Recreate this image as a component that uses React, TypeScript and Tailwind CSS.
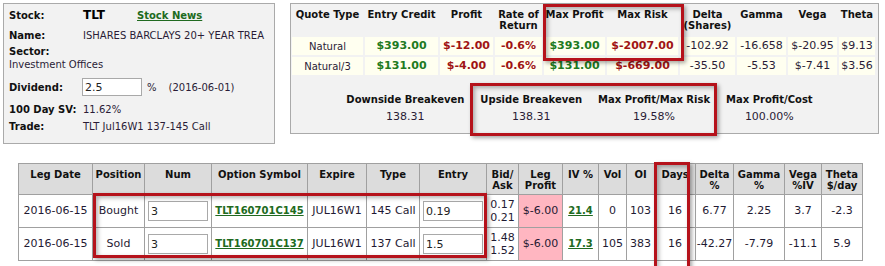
import React from 'react';

const quoteRows = [
  { type: 'Natural', credit: '$393.00', profit: '$-12.00', ror: '-0.6%', maxProfit: '$393.00', maxRisk: '$-2007.00', delta: '-102.92', gamma: '-16.658', vega: '$-20.95', theta: '$9.13' },
  { type: 'Natural/3', credit: '$131.00', profit: '$-4.00', ror: '-0.6%', maxProfit: '$131.00', maxRisk: '$-669.00', delta: '-35.50', gamma: '-5.53', vega: '$-7.41', theta: '$3.56' },
];

const legs = [
  { date: '2016-06-15', pos: 'Bought', num: '3', symbol: 'TLT160701C145', expire: 'JUL16W1', type: '145 Call', entry: '0.19', bid: '0.17', ask: '0.21', profit: '$-6.00', iv: '21.4', vol: '0', oi: '103', days: '16', delta: '6.77', gamma: '2.25', vega: '3.7', theta: '-2.3' },
  { date: '2016-06-15', pos: 'Sold', num: '3', symbol: 'TLT160701C137', expire: 'JUL16W1', type: '137 Call', entry: '1.5', bid: '1.48', ask: '1.52', profit: '$-6.00', iv: '17.3', vol: '105', oi: '383', days: '16', delta: '-42.27', gamma: '-7.79', vega: '-11.1', theta: '5.9' },
];

const breakevens = [
  { label: 'Downside Breakeven', value: '138.31' },
  { label: 'Upside Breakeven', value: '138.31' },
  { label: 'Max Profit/Max Risk', value: '19.58%' },
  { label: 'Max Profit/Cost', value: '100.00%' },
];

// red highlight boxes drawn over the tables
const Highlight = ({ className }: { className: string }) => (
  <div
    className={`absolute border-[3px] border-[#b5121b] shadow-[2px_2px_4px_rgba(0,0,0,0.35),inset_2px_2px_4px_rgba(0,0,0,0.3)] pointer-events-none ${className}`}
  />
);

export default function App() {
  const th = 'font-bold text-[10px] text-[#111] align-top pt-[3px] leading-[11px]';
  const td = 'bg-[#fffff0] h-[18px] text-center';
  const bth = 'border border-[#a0a0a0] bg-[#dcdcdc] font-bold text-[10px] text-[#111] align-top pt-[5px] leading-[11px]';
  const btd = 'border border-[#a0a0a0] text-center h-[33px]';

  return (
    <div className="relative w-[885px] h-[266px] overflow-hidden bg-white font-['DejaVu_Sans',Verdana,sans-serif] text-[#2a1c36]">
      <div className="flex pl-[3px] pt-[3px] gap-[15px]">
        {/* Stock summary */}
        <div className="w-[272px] h-[141px] border border-[#aaa] bg-[#f2f2f2] pl-[5px] text-[10px]">
          <div className="flex items-center h-[22px]">
            <span className="w-[74px] font-bold text-[#111]">Stock:</span>
            <span className="w-[54px] font-bold text-[12px] text-black">TLT</span>
            <a className="font-bold text-[#206a20] underline">Stock News</a>
          </div>
          <div className="flex items-center h-[18px]">
            <span className="w-[74px] font-bold text-[#111]">Name:</span>
            <span>ISHARES BARCLAYS 20+ YEAR TREA</span>
          </div>
          <div className="h-[14px] flex items-center font-bold text-[#111]">Sector:</div>
          <div className="h-[12px] flex items-center">Investment Offices</div>
          <div className="flex items-center h-[22px] mt-[6px]">
            <span className="w-[73px] font-bold text-[#111]">Dividend:</span>
            <input
              readOnly
              value="2.5"
              className="w-[60px] h-[18px] border border-[#a9a9a9] bg-white px-[2px] text-[11px] text-[#222] outline-none"
            />
            <span className="ml-[5px]">%</span>
            <span className="ml-[12px]">(2016-06-01)</span>
          </div>
          <div className="flex items-center h-[18px] mt-[2px]">
            <span className="w-[74px] font-bold text-[#111]">100 Day SV:</span>
            <span>11.62%</span>
          </div>
          <div className="flex items-center h-[16px]">
            <span className="w-[74px] font-bold text-[#111]">Trade:</span>
            <span>TLT Jul16W1 137-145 Call</span>
          </div>
        </div>

        {/* Quote summary */}
        <div className="w-[589px] h-[131px] border border-[#aaa] bg-[#f2f2f2]">
          <table className="table-fixed border-separate border-spacing-[2px] -ml-[1px]">
            <colgroup>
              <col className="w-[71px]" />
              <col className="w-[73px]" />
              <col className="w-[53px]" />
              <col className="w-[47px]" />
              <col className="w-[61px]" />
              <col className="w-[71px]" />
              <col className="w-[55px]" />
              <col className="w-[49px]" />
              <col className="w-[49px]" />
              <col className="w-[36px]" />
            </colgroup>
            <thead>
              <tr className="h-[29px]">
                <th className={th}>Quote Type</th>
                <th className={th}>Entry Credit</th>
                <th className={th}>Profit</th>
                <th className={th}>Rate of<br />Return</th>
                <th className={th}>Max Profit</th>
                <th className={th}>Max Risk</th>
                <th className={th}>Delta<br />(Shares)</th>
                <th className={th}>Gamma</th>
                <th className={th}>Vega</th>
                <th className={th}>Theta</th>
              </tr>
            </thead>
            <tbody className="text-[11px]">
              {quoteRows.map((r) => (
                <tr key={r.type}>
                  <td className={`${td} text-[10px]`}>{r.type}</td>
                  <td className={`${td} font-bold text-[#217a21]`}>{r.credit}</td>
                  <td className={`${td} font-bold text-[#a01414]`}>{r.profit}</td>
                  <td className={`${td} font-bold text-[#a01414]`}>{r.ror}</td>
                  <td className={`${td} font-bold text-[#217a21]`}>{r.maxProfit}</td>
                  <td className={`${td} font-bold text-[#a01414]`}>{r.maxRisk}</td>
                  <td className={td}>{r.delta}</td>
                  <td className={td}>{r.gamma}</td>
                  <td className={td}>{r.vega}</td>
                  <td className={td}>{r.theta}</td>
                </tr>
              ))}
            </tbody>
          </table>
          <div className="flex justify-center gap-[16px] mt-[17px] pr-[10px]">
            {breakevens.map((b) => (
              <div key={b.label} className="flex flex-col items-center">
                <span className="font-bold text-[10px] text-[#111] leading-[12px]">{b.label}</span>
                <span className="text-[11px] mt-[4px] leading-[13px]">{b.value}</span>
              </div>
            ))}
          </div>
        </div>
      </div>

      {/* Legs */}
      <table className="table-fixed border-collapse ml-[18px] mt-[19px] text-[11px] text-[#1f1a33]">
        <colgroup>
          <col className="w-[74px]" />
          <col className="w-[52px]" />
          <col className="w-[67px]" />
          <col className="w-[96px]" />
          <col className="w-[59px]" />
          <col className="w-[53px]" />
          <col className="w-[67px]" />
          <col className="w-[32px]" />
          <col className="w-[44px]" />
          <col className="w-[36px]" />
          <col className="w-[28px]" />
          <col className="w-[28px]" />
          <col className="w-[41px]" />
          <col className="w-[38px]" />
          <col className="w-[51px]" />
          <col className="w-[37px]" />
          <col className="w-[41px]" />
        </colgroup>
        <thead>
          <tr className="h-[31px]">
            <th className={bth}>Leg Date</th>
            <th className={bth}>Position</th>
            <th className={bth}>Num</th>
            <th className={bth}>Option Symbol</th>
            <th className={bth}>Expire</th>
            <th className={bth}>Type</th>
            <th className={bth}>Entry</th>
            <th className={bth}>Bid/<br />Ask</th>
            <th className={bth}>Leg<br />Profit</th>
            <th className={bth}>IV %</th>
            <th className={bth}>Vol</th>
            <th className={bth}>OI</th>
            <th className={bth}>Days</th>
            <th className={bth}>Delta<br />%</th>
            <th className={bth}>Gamma<br />%</th>
            <th className={bth}>Vega<br />%IV</th>
            <th className={bth}>Theta<br />$/day</th>
          </tr>
        </thead>
        <tbody>
          {legs.map((l) => (
            <tr key={l.symbol}>
              <td className={btd}>{l.date}</td>
              <td className={btd}>{l.pos}</td>
              <td className={`${btd} px-[2px]`}>
                <input
                  readOnly
                  value={l.num}
                  className="w-[60px] h-[20px] border border-[#a9a9a9] bg-white px-[2px] text-[11px] text-[#222] outline-none"
                />
              </td>
              <td className={btd}>
                <a className="font-bold text-[10px] text-[#206a20] underline">{l.symbol}</a>
              </td>
              <td className={btd}>{l.expire}</td>
              <td className={btd}>{l.type}</td>
              <td className={`${btd} px-[2px]`}>
                <input
                  readOnly
                  value={l.entry}
                  className="w-[60px] h-[20px] border border-[#a9a9a9] bg-white px-[2px] text-[11px] text-[#222] outline-none"
                />
              </td>
              <td className={`${btd} leading-[13px]`}>
                {l.bid}
                <br />
                {l.ask}
              </td>
              <td className={`${btd} bg-[#ffb6c1]`}>{l.profit}</td>
              <td className={btd}>
                <a className="font-bold text-[10px] text-[#206a20] underline">{l.iv}</a>
              </td>
              <td className={btd}>{l.vol}</td>
              <td className={btd}>{l.oi}</td>
              <td className={btd}>{l.days}</td>
              <td className={btd}>{l.delta}</td>
              <td className={btd}>{l.gamma}</td>
              <td className={btd}>{l.vega}</td>
              <td className={btd}>{l.theta}</td>
            </tr>
          ))}
        </tbody>
      </table>

      <Highlight className="left-[543px] top-[4px] w-[141px] h-[57px]" />
      <Highlight className="left-[470px] top-[83px] w-[247px] h-[53px]" />
      <Highlight className="left-[93px] top-[193px] w-[394px] h-[65px]" />
      <Highlight className="left-[654px] top-[162px] w-[36px] h-[110px]" />
    </div>
  );
}
